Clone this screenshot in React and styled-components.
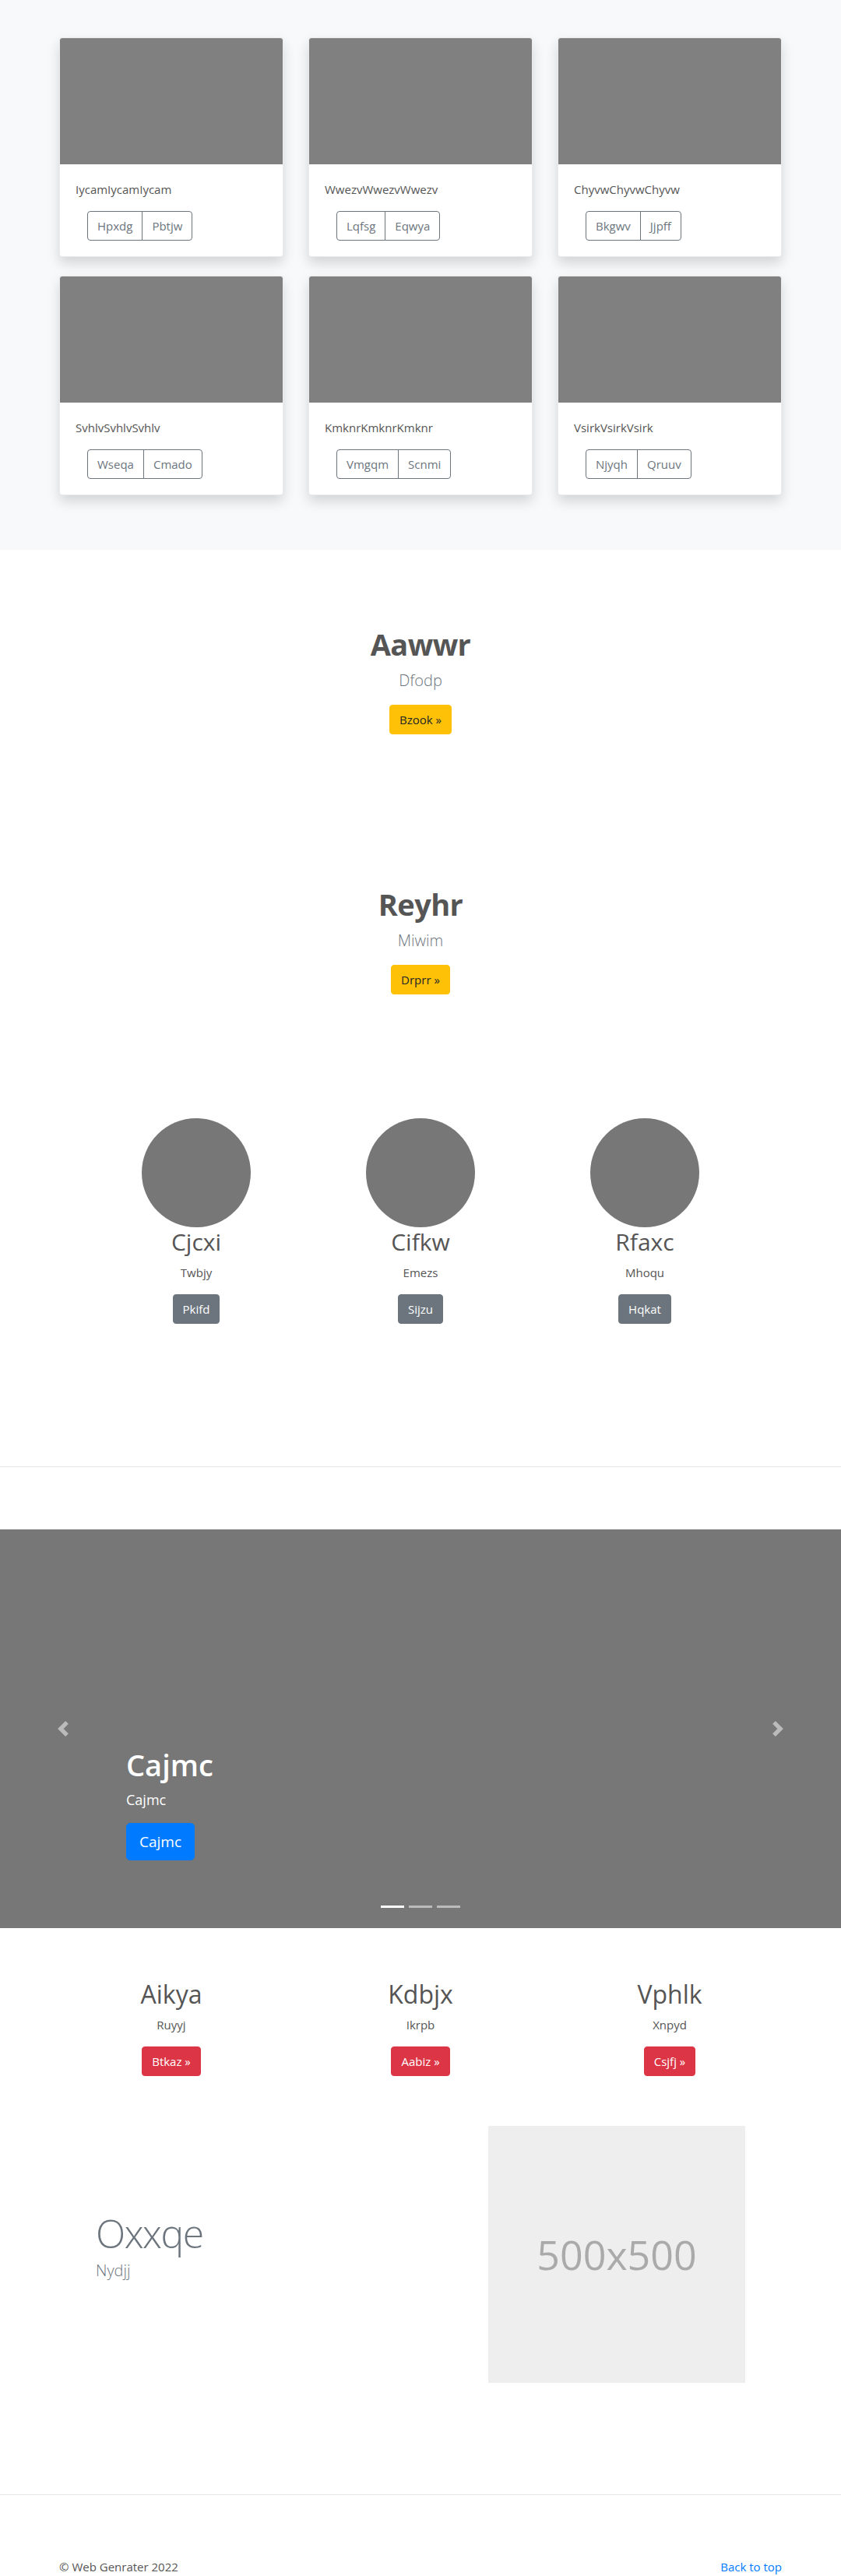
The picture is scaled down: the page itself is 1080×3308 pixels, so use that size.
import React from "react";
import styled, { createGlobalStyle } from "styled-components";

const GlobalStyle = createGlobalStyle`
  *, *::before, *::after {
    box-sizing: border-box;
  }
  body {
    margin: 0;
    font-family: "Open Sans", "Noto Sans", sans-serif;
    font-size: 15px;
    line-height: 24px;
    color: #555;
    background: #fff;
  }
`;

// album of cards

const Album = styled.section`
  background-color: #f8f9fa;
  padding: 48px 0 70px;
`;

const CardGrid = styled.div`
  width: 928px;
  margin: 0 auto;
  display: grid;
  grid-template-columns: repeat(3, 1fr);
  column-gap: 32px;
  row-gap: 24px;
`;

const Card = styled.div`
  background: #fff;
  border: 1px solid rgba(0, 0, 0, 0.08);
  border-radius: 4px;
  overflow: hidden;
  box-shadow: 0 8px 16px rgba(0, 0, 0, 0.15);
`;

const Thumb = styled.div`
  height: 162px;
  background-color: #808080;
`;

const CardBody = styled.div`
  padding: 20px;
`;

const CardText = styled.p`
  margin: 0 0 16px;
`;

const BtnGroup = styled.div`
  display: inline-flex;
  margin-left: 15px;
`;

const OutlineBtn = styled.button`
  font-family: inherit;
  font-size: 15px;
  line-height: 24px;
  padding: 6px 12px;
  color: #6c757d;
  background: transparent;
  border: 1px solid #6c757d;
  border-radius: 0;
  &:first-child {
    border-radius: 4px 0 0 4px;
  }
  &:last-child {
    border-radius: 0 4px 4px 0;
    margin-left: -1px;
  }
`;

// shared buttons

const Btn = styled.a`
  display: inline-block;
  font-size: ${(p) => (p.$lg ? "19px" : "15px")};
  line-height: ${(p) => (p.$lg ? "30px" : "24px")};
  padding: ${(p) => (p.$lg ? "8px 16px" : "6px 12px")};
  border: 1px solid ${(p) => p.$bg};
  border-radius: ${(p) => (p.$lg ? "5px" : "4px")};
  background: ${(p) => p.$bg};
  color: ${(p) => p.$fg || "#fff"};
  text-decoration: none;
`;

// heroes

const Hero = styled.section`
  padding: 97px 0;
  text-align: center;
`;

const HeroTitle = styled.h1`
  margin: 0 0 8px;
  font-size: 38px;
  font-weight: 700;
  line-height: 48px;
  letter-spacing: -0.6px;
  color: #555;
`;

const HeroLead = styled.p`
  margin: 0 0 16px;
  font-size: 20px;
  line-height: 30px;
  font-weight: 300;
  color: #6c757d;
`;

// marketing circles

const Marketing = styled.section`
  width: 864px;
  margin: 0 auto;
  padding-top: 62px;
  display: grid;
  grid-template-columns: repeat(3, 1fr);
  text-align: center;
`;

const Column = styled.div`
  display: flex;
  flex-direction: column;
  align-items: center;
`;

const Circle = styled.div`
  width: 140px;
  height: 140px;
  border-radius: 50%;
  background: #777;
`;

const ColTitle = styled.h2`
  margin: 0 0 8px;
  font-size: ${(p) => p.$size || 32}px;
  font-weight: ${(p) => p.$weight || 400};
  line-height: 38px;
  color: #555;
`;

const ColText = styled.p`
  margin: 0 0 16px;
`;

const Divider = styled.hr`
  border: 0;
  border-top: 1px solid rgba(0, 0, 0, 0.1);
  margin: ${(p) => p.$top}px 0 80px;
`;

// carousel

const Carousel = styled.section`
  position: relative;
  height: 512px;
  background: #777;
  overflow: hidden;
`;

const Control = styled.div`
  position: absolute;
  top: 0;
  bottom: 0;
  ${(p) => (p.$side === "left" ? "left: 0;" : "right: 0;")}
  width: 15%;
  display: flex;
  align-items: center;
  justify-content: center;
  opacity: 0.5;
`;

const Caption = styled.div`
  position: absolute;
  left: 15%;
  right: 15%;
  bottom: 51px;
  padding: 20px 0;
  color: #fff;
  text-align: left;
`;

const CaptionTitle = styled.h1`
  margin: 0 0 8px;
  font-size: 38px;
  font-weight: 600;
  line-height: 48px;
`;

const CaptionText = styled.p`
  margin: 0 0 16px;
  font-size: 18px;
  line-height: 27px;
`;

const Indicators = styled.ol`
  position: absolute;
  left: 0;
  right: 0;
  bottom: 0;
  margin: 0 0 16px;
  padding: 0;
  list-style: none;
  display: flex;
  justify-content: center;
`;

const Indicator = styled.li`
  width: 30px;
  height: 23px;
  margin: 0 3px;
  border-top: 10px solid transparent;
  border-bottom: 10px solid transparent;
  background: #fff;
  background-clip: padding-box;
  opacity: ${(p) => (p.$active ? 1 : 0.5)};
`;

// features row

const Features = styled.section`
  width: 960px;
  margin: 0 auto;
  padding-top: 66px;
  display: grid;
  grid-template-columns: repeat(3, 1fr);
  text-align: center;
`;

// featurette

const Featurette = styled.section`
  width: 864px;
  margin: 64px auto 0;
  display: grid;
  grid-template-columns: 7fr 5fr;
  align-items: center;
`;

const FeatCol = styled.div`
  padding: 0 15px;
`;

const FeatHeading = styled.h2`
  margin: 0 0 8px;
  font-size: 50px;
  font-weight: 300;
  line-height: 1;
  letter-spacing: -1.5px;
  color: #6c757d;
`;

const FeatLead = styled.p`
  margin: 0 0 16px;
  font-size: 20px;
  line-height: 30px;
  font-weight: 300;
  color: #6c757d;
`;

const Placeholder = styled.div`
  width: 100%;
  aspect-ratio: 1 / 1;
  background: #eee;
  color: #aaa;
  font-size: 52px;
  display: flex;
  align-items: center;
  justify-content: center;
`;

// footer

const Footer = styled.footer`
  width: 928px;
  margin: 0 auto;
  display: flex;
  justify-content: space-between;
`;

const FooterText = styled.p`
  margin: 0 0 16px;
`;

const FooterLink = styled.a`
  color: #007bff;
  text-decoration: none;
`;

const cards = [
  ["IycamIycamIycam", "Hpxdg", "Pbtjw"],
  ["WwezvWwezvWwezv", "Lqfsg", "Eqwya"],
  ["ChyvwChyvwChyvw", "Bkgwv", "Jjpff"],
  ["SvhlvSvhlvSvhlv", "Wseqa", "Cmado"],
  ["KmknrKmknrKmknr", "Vmgqm", "Scnmi"],
  ["VsirkVsirkVsirk", "Njyqh", "Qruuv"],
];

const people = [
  ["Cjcxi", "Twbjy", "Pkifd"],
  ["Cifkw", "Emezs", "Sijzu"],
  ["Rfaxc", "Mhoqu", "Hqkat"],
];

const features = [
  ["Aikya", "Ruyyj", "Btkaz »"],
  ["Kdbjx", "Ikrpb", "Aabiz »"],
  ["Vphlk", "Xnpyd", "Csjfj »"],
];

const Chevron = ({ dir }) => (
  <svg width="20" height="20" viewBox="0 0 8 8" fill="#fff">
    <path
      d={
        dir === "left"
          ? "M5.25 0l-4 4 4 4 1.5-1.5L4.25 4l2.5-2.5L5.25 0z"
          : "M2.75 0l-1.5 1.5L3.75 4l-2.5 2.5L2.75 8l4-4-4-4z"
      }
    />
  </svg>
);

const App = () => {
  return (
    <>
      <GlobalStyle />
      <Album>
        <CardGrid>
          {cards.map(([text, a, b]) => (
            <Card key={text}>
              <Thumb />
              <CardBody>
                <CardText>{text}</CardText>
                <BtnGroup>
                  <OutlineBtn>{a}</OutlineBtn>
                  <OutlineBtn>{b}</OutlineBtn>
                </BtnGroup>
              </CardBody>
            </Card>
          ))}
        </CardGrid>
      </Album>

      <Hero>
        <HeroTitle>Aawwr</HeroTitle>
        <HeroLead>Dfodp</HeroLead>
        <Btn $bg="#ffc107" $fg="#212529">Bzook »</Btn>
      </Hero>
      <Hero>
        <HeroTitle>Reyhr</HeroTitle>
        <HeroLead>Miwim</HeroLead>
        <Btn $bg="#ffc107" $fg="#212529">Drprr »</Btn>
      </Hero>

      <Marketing>
        {people.map(([name, text, btn]) => (
          <Column key={name}>
            <Circle />
            <ColTitle $size={30}>{name}</ColTitle>
            <ColText>{text}</ColText>
            <Btn $bg="#6c757d">{btn}</Btn>
          </Column>
        ))}
      </Marketing>

      <Divider $top={183} />

      <Carousel>
        <Control $side="left">
          <Chevron dir="left" />
        </Control>
        <Control $side="right">
          <Chevron dir="right" />
        </Control>
        <Caption>
          <CaptionTitle>Cajmc</CaptionTitle>
          <CaptionText>Cajmc</CaptionText>
          <CaptionText>
            <Btn $lg $bg="#007bff">Cajmc</Btn>
          </CaptionText>
        </Caption>
        <Indicators>
          <Indicator $active />
          <Indicator />
          <Indicator />
        </Indicators>
      </Carousel>

      <Features>
        {features.map(([title, text, btn]) => (
          <Column key={title}>
            <ColTitle $weight={500}>{title}</ColTitle>
            <ColText>{text}</ColText>
            <Btn $bg="#dc3545">{btn}</Btn>
          </Column>
        ))}
      </Features>

      <Featurette>
        <FeatCol>
          <FeatHeading>Oxxqe</FeatHeading>
          <FeatLead>Nydjj</FeatLead>
        </FeatCol>
        <FeatCol>
          <Placeholder>500x500</Placeholder>
        </FeatCol>
      </Featurette>

      <Divider $top={143} />

      <Footer>
        <FooterText>© Web Genrater 2022</FooterText>
        <FooterText>
          <FooterLink href="#">Back to top</FooterLink>
        </FooterText>
      </Footer>
    </>
  );
};

export default App;
